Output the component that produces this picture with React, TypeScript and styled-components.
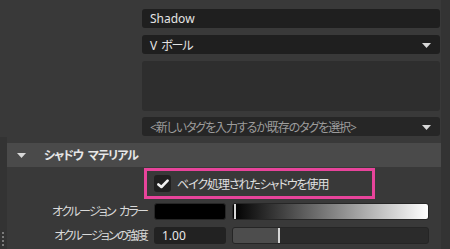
import { FC } from "react"
import styled, { createGlobalStyle } from "styled-components"

const GlobalStyle = createGlobalStyle`
	body {
		margin: 0;
		background: #393939;
		font-family: "Noto Sans", "Noto Sans CJK JP", sans-serif;
		font-size: 12px;
		font-feature-settings: "palt";
		color: #dcdcdc;
	}
`

const Caret: FC = () => (
	<svg width="9" height="5" viewBox="0 0 9 5">
		<path d="M0 0 H9 L4.5 5 Z" fill="#d8d8d8" />
	</svg>
)

const Check: FC = () => (
	<svg width="12" height="10" viewBox="0 0 12 10">
		<path d="M1.4 5.4 L4.4 8 L10.6 1.6" stroke="#f2f2f2" strokeWidth="2.6" fill="none" strokeLinecap="round" strokeLinejoin="round" />
	</svg>
)

const App: FC = () => {
	return (
		<Page>
			<GlobalStyle />
			<Main>
				<Fields>
					<Field>Shadow</Field>
					<Field>
						<Jp>V ボール</Jp>
						<Caret />
					</Field>
					<TextArea />
					<Field $tone="#262626" $muted>
						<Jp>&lt;新しいタグを入力するか既存のタグを選択&gt;</Jp>
						<Caret />
					</Field>
				</Fields>

				<Section>
					<Grip>
						<i /><i /><i /><i />
					</Grip>
					<SectionBody>
						<Header>
							<Caret />
							<Jp>シャドウ マテリアル</Jp>
						</Header>

						<Highlight>
							<CheckBox><Check /></CheckBox>
							<Jp>ベイク処理されたシャドウを使用</Jp>
						</Highlight>

						<Row>
							<Label>オクルージョン カラー</Label>
							<Swatch />
							<Gradient><Handle $left={1} /></Gradient>
						</Row>
						<Row>
							<Label>オクルージョンの強度</Label>
							<ValueBox>1.00</ValueBox>
							<Slider>
								<Fill style={{ width: `${0.23 * 100}%` }} />
								<Handle $left={45} />
							</Slider>
						</Row>
					</SectionBody>
				</Section>
			</Main>
			<ScrollTrack />
		</Page>
	)
}

const Page = styled.div`
	/* Layout */
	display: flex;
	width: 450px;
	height: 249px;
	overflow: hidden;
`

const Main = styled.div`
	/* Layout */
	flex: 1;
	display: flex;
	flex-direction: column;
`

const ScrollTrack = styled.div`
	width: 9px;
	background: #333333;
`

const Jp = styled.span`
	letter-spacing: -1.1px;
	word-spacing: 3px;
	white-space: nowrap;
`

const Fields = styled.div`
	/* Layout */
	display: flex;
	flex-direction: column;
	gap: 7px;
	padding: 9px 1px 0 142px;
`

const Field = styled.div<{ $tone?: string; $muted?: boolean }>`
	/* Layout */
	height: 19px;
	display: flex;
	align-items: center;
	justify-content: space-between;
	padding: 0 9px 0 8px;
	box-sizing: border-box;

	/* Color */
	background: ${p => p.$tone || "#1f1f1f"};
	color: ${p => (p.$muted ? "#9c9c9c" : "#e4e4e4")};
	border-radius: 3px;

	svg {
		margin-top: 1px;
	}
`

const TextArea = styled.div`
	height: 50px;
	margin-bottom: -1px;
	background: #2e2e2e;
	border-radius: 3px;
`

const Section = styled.div`
	/* Layout */
	flex: 1;
	display: flex;
	margin-top: 1px;
`

const Grip = styled.div`
	/* Layout */
	width: 7px;
	display: flex;
	flex-direction: column;
	justify-content: flex-end;
	align-items: flex-start;
	gap: 2px;
	padding: 0 0 3px 2px;
	box-sizing: border-box;
	background: #333333;

	i {
		width: 2px;
		height: 2px;
		background: #7a7a7a;
	}
`

const SectionBody = styled.div`
	flex: 1;
	padding-top: 6px;
`

const Header = styled.div`
	/* Layout */
	height: 24px;
	display: flex;
	align-items: center;
	gap: 18px;
	padding-left: 10px;

	/* Color */
	background: #4a4a4a;
	color: #e6e6e6;
	font-weight: bold;
`

const Highlight = styled.div`
	/* Layout */
	width: 231px;
	height: 31px;
	margin: 1px 0 0 137px;
	display: flex;
	align-items: center;
	gap: 6px;
	padding-left: 7px;
	box-sizing: border-box;

	/* Border */
	border: 3px solid #e8449b;
	color: #e0e0e0;
`

const CheckBox = styled.div`
	width: 17px;
	height: 17px;
	display: flex;
	align-items: center;
	justify-content: center;
	background: #202020;
	border-radius: 3px;
`

const Row = styled.div`
	/* Layout */
	display: grid;
	grid-template-columns: 141px 72px 197px;
	column-gap: 6px;
	align-items: center;
	height: 17px;
	margin-top: 3px;

	& + & {
		margin-top: 7px;
	}
`

const Label = styled.div`
	text-align: right;
	color: #dadada;
	white-space: nowrap;
	letter-spacing: -1.8px;
	word-spacing: 3px;
	padding-right: 1px;
`

const Swatch = styled.div`
	height: 17px;
	background: #000000;
	border-radius: 3px;
	border: 1px solid #262626;
	box-sizing: border-box;
`

const ValueBox = styled.div`
	height: 17px;
	display: flex;
	align-items: center;
	padding-left: 8px;
	background: #222222;
	border-radius: 3px;
	color: #e8e8e8;
`

const Gradient = styled.div`
	position: relative;
	height: 17px;
	background: linear-gradient(to right, #000000, #ffffff);
	border: 1px solid #262626;
	border-radius: 3px;
	box-sizing: border-box;
`

const Slider = styled.div`
	position: relative;
	height: 17px;
	background: #2b2b2b;
	border: 1px solid #252525;
	border-radius: 3px;
	box-sizing: border-box;
	overflow: hidden;
`

const Fill = styled.div`
	height: 100%;
	background: #4d4d4d;
`

const Handle = styled.div<{ $left: number }>`
	position: absolute;
	top: 0;
	bottom: 0;
	left: ${p => p.$left}px;
	width: 2px;
	background: #d6d6d6;
`

export default App
